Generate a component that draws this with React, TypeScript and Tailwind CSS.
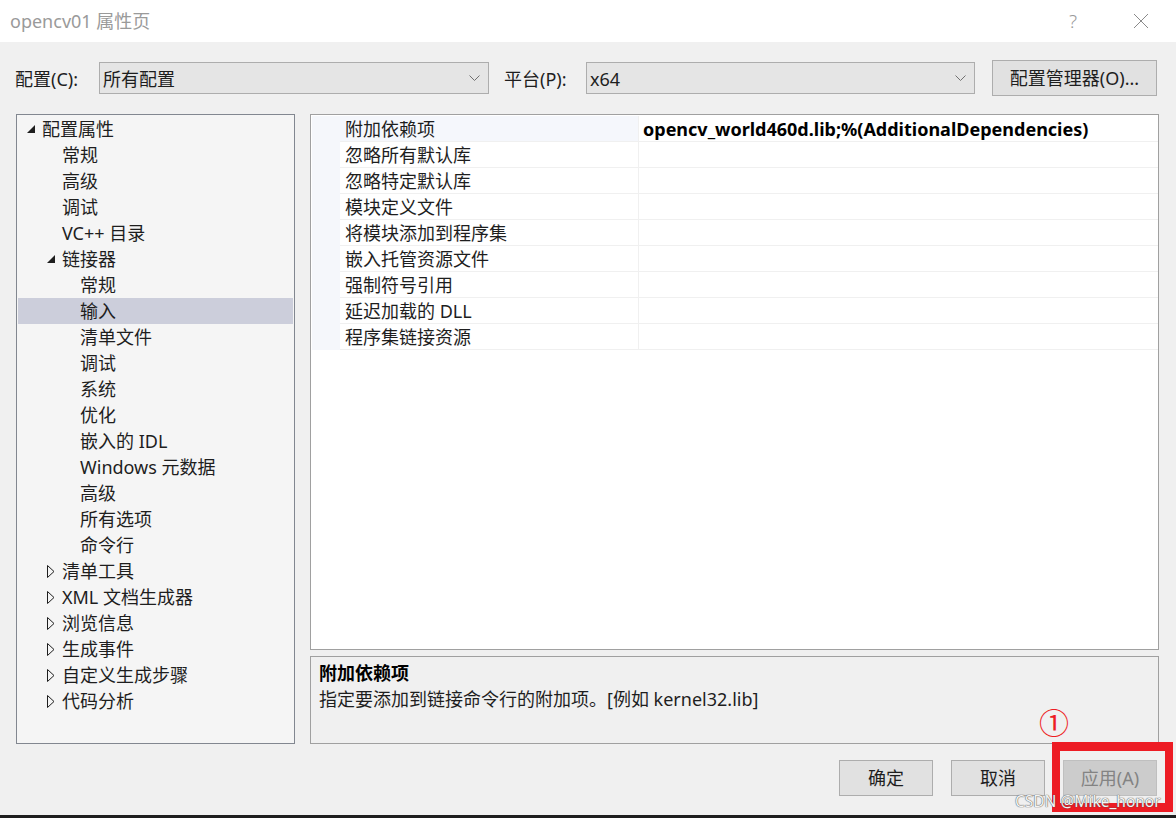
import React from 'react';

type TreeNode = { label: string; level: 0 | 1 | 2; state?: 'open' | 'closed'; selected?: boolean };

const tree: TreeNode[] = [
  { label: '配置属性', level: 0, state: 'open' },
  { label: '常规', level: 1 },
  { label: '高级', level: 1 },
  { label: '调试', level: 1 },
  { label: 'VC++ 目录', level: 1 },
  { label: '链接器', level: 1, state: 'open' },
  { label: '常规', level: 2 },
  { label: '输入', level: 2, selected: true },
  { label: '清单文件', level: 2 },
  { label: '调试', level: 2 },
  { label: '系统', level: 2 },
  { label: '优化', level: 2 },
  { label: '嵌入的 IDL', level: 2 },
  { label: 'Windows 元数据', level: 2 },
  { label: '高级', level: 2 },
  { label: '所有选项', level: 2 },
  { label: '命令行', level: 2 },
  { label: '清单工具', level: 1, state: 'closed' },
  { label: 'XML 文档生成器', level: 1, state: 'closed' },
  { label: '浏览信息', level: 1, state: 'closed' },
  { label: '生成事件', level: 1, state: 'closed' },
  { label: '自定义生成步骤', level: 1, state: 'closed' },
  { label: '代码分析', level: 1, state: 'closed' },
];

const indent = ['pl-[7px]', 'pl-[27px]', 'pl-[45px]'];

const props = [
  { name: '附加依赖项', value: 'opencv_world460d.lib;%(AdditionalDependencies)' },
  { name: '忽略所有默认库', value: '' },
  { name: '忽略特定默认库', value: '' },
  { name: '模块定义文件', value: '' },
  { name: '将模块添加到程序集', value: '' },
  { name: '嵌入托管资源文件', value: '' },
  { name: '强制符号引用', value: '' },
  { name: '延迟加载的 DLL', value: '' },
  { name: '程序集链接资源', value: '' },
];

const Chevron = () => (
  <svg width="11" height="7" viewBox="0 0 11 7" className="shrink-0">
    <polyline points="0.5,0.5 5.5,5.5 10.5,0.5" fill="none" stroke="#707070" strokeWidth="1" />
  </svg>
);

const Select = ({ value, width }: { value: string; width: string }) => (
  <div className={`${width} h-[32px] shrink-0 flex items-center justify-between bg-[#e5e5e5] border border-[#adadad] pl-[3px] pr-[8px]`}>
    <span className="pt-[2px]">{value}</span>
    <Chevron />
  </div>
);

const Arrow = ({ state }: { state?: 'open' | 'closed' }) => (
  <div className="w-[18px] shrink-0 flex items-center">
    {state === 'open' && (
      <svg width="10" height="10" viewBox="0 0 10 10" className="ml-[1px]">
        <polygon points="9,1 9,9 1,9" fill="#1e1e1e" />
      </svg>
    )}
    {state === 'closed' && (
      <svg width="8" height="13" viewBox="0 0 8 13" className="ml-[2px]">
        <polygon points="0.5,0.5 7,6.5 0.5,12.5" fill="none" stroke="#1e1e1e" strokeWidth="1" />
      </svg>
    )}
  </div>
);

const Btn = ({ children, disabled }: { children: React.ReactNode; disabled?: boolean }) => (
  <div
    className={
      disabled
        ? 'w-[94px] h-[36px] flex items-center justify-center bg-[#cccccc] border border-[#bfbfbf] text-[#838383]'
        : 'w-[94px] h-[36px] flex items-center justify-center bg-[#e1e1e1] border border-[#adadad]'
    }
  >
    {children}
  </div>
);

export default function App() {
  return (
    <div className="w-[1176px] h-[818px] relative overflow-hidden flex flex-col bg-[#f0f0f0] text-[#1e1e1e] text-[18px] font-['Noto_Sans','Noto_Sans_CJK_SC',sans-serif]">
      {/* title bar */}
      <div className="h-[42px] shrink-0 bg-white flex items-center pl-[10px] pr-[27px]">
        <span className="text-[18px] text-[#9a9a9a]">opencv01 属性页</span>
        <span className="ml-auto text-[19px] text-[#9a9a9a] font-light">?</span>
        <svg width="16" height="16" viewBox="0 0 16 16" className="ml-[56px]">
          <line x1="1" y1="1" x2="15" y2="15" stroke="#8a8a8a" strokeWidth="1" />
          <line x1="15" y1="1" x2="1" y2="15" stroke="#8a8a8a" strokeWidth="1" />
        </svg>
      </div>

      {/* configuration row */}
      <div className="mt-[18px] h-[36px] shrink-0 flex items-center pl-[15px]">
        <span className="w-[84px] shrink-0 pt-[2px]">配置(C):</span>
        <Select value="所有配置" width="w-[390px]" />
        <span className="w-[82px] shrink-0 ml-[15px] pt-[2px]">平台(P):</span>
        <Select value="x64" width="w-[389px]" />
        <div className="ml-[17px] w-[165px] h-[36px] flex items-center justify-center bg-[#e1e1e1] border border-[#adadad]">
          配置管理器(O)...
        </div>
      </div>

      {/* main area */}
      <div className="mt-[18px] flex px-[16px] gap-[15px] shrink-0">
        <div className="w-[279px] h-[630px] bg-[#f5f5f5] border border-[#828790] pt-[1px]">
          {tree.map((n, i) => (
            <div
              key={i}
              className={`h-[26px] mx-[1px] flex items-center leading-[26px] ${indent[n.level]} ${n.selected ? 'bg-[#cccedb]' : ''}`}
            >
              <Arrow state={n.state} />
              <span className="-ml-[1px]">{n.label}</span>
            </div>
          ))}
        </div>

        <div className="w-[849px] flex flex-col gap-[6px]">
          <div className="h-[536px] bg-white border border-[#a0a0a0] pt-[1px] pl-[1px]">
            {props.map((p, i) => (
              <div key={i} className="h-[26px] flex leading-[26px]">
                <div className="w-[28px] shrink-0 bg-[#f5f7fb]" />
                <div className={`w-[298px] shrink-0 pl-[5px] border-b border-[#f0f0f0] ${i === 0 ? 'bg-[#f5f7fc]' : ''}`}>
                  {p.name}
                </div>
                <div className="flex-1 pl-[4px] border-l border-b border-[#f0f0f0] font-bold text-[#000]">{p.value}</div>
              </div>
            ))}
          </div>
          <div className="h-[88px] bg-[#f0f0f0] border border-[#a0a0a0] pl-[8px] pt-[3px]">
            <div className="font-bold leading-[26px] text-[#000]">附加依赖项</div>
            <div className="leading-[26px]">指定要添加到链接命令行的附加项。[例如 kernel32.lib]</div>
          </div>
        </div>
      </div>

      {/* dialog buttons */}
      <div className="mt-[16px] flex justify-end pr-[19px] gap-[18px] shrink-0">
        <Btn>确定</Btn>
        <Btn>取消</Btn>
        <Btn disabled>应用(A)</Btn>
      </div>

      <div className="mt-auto h-[3px] bg-[#1e1e1e] shrink-0" />

      {/* annotations */}
      <div className="absolute left-[1052px] top-[742px] w-[121px] h-[70px] border-[8px] border-t-[9px] border-b-[9px] border-[#ed1c24]" />
      <div className="absolute left-[1039px] top-[703px] text-[30px] leading-[36px] text-[#ed1c24] font-['Noto_Sans_CJK_SC',sans-serif]">①</div>
      <div className="absolute left-[1015px] top-[791px] text-[15.5px] leading-[21px] text-[#f4f4f4] [text-shadow:0_0_1px_#555,0_0_1px_#555]">
        CSDN @Mike_honor
      </div>
    </div>
  );
}
